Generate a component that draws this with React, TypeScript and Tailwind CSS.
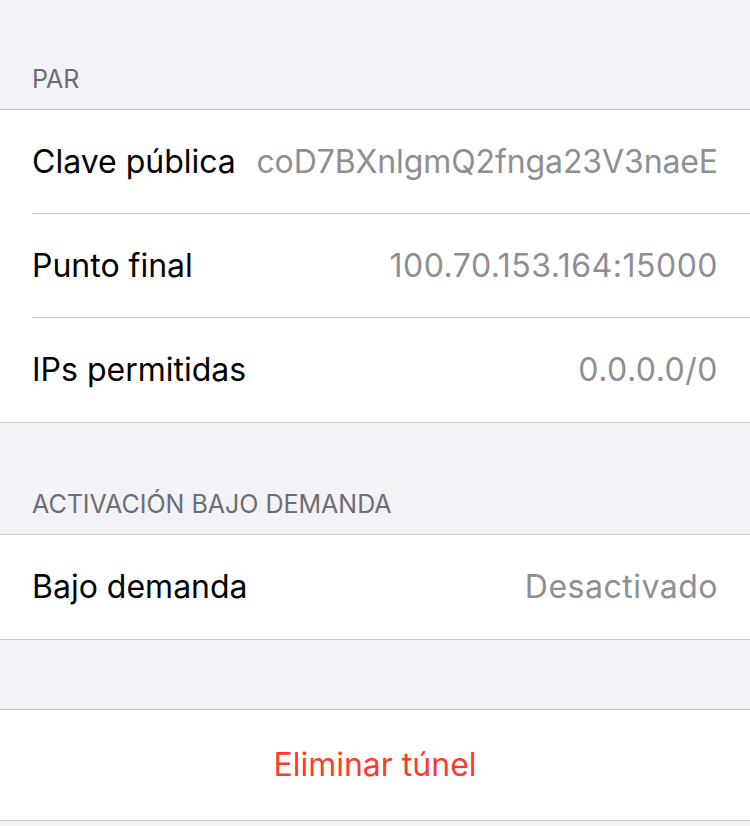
const font = { fontFamily: 'Inter, "Noto Sans", sans-serif' }

function Row({
  label,
  value,
  last,
  tight,
}: {
  label: string
  value: string
  last?: boolean
  tight?: boolean
}) {
  return (
    <div className="bg-white pl-[32px]">
      <div
        className={`flex h-[104px] items-center justify-between pr-[32px] ${last ? '' : 'border-b border-[#c8c7cc]'}`}
      >
        <span className="text-[32px] text-black whitespace-nowrap">{label}</span>
        <span
          className={`ml-[12px] whitespace-nowrap text-[32px] text-[#8e8e93] ${tight ? 'tracking-[-0.1px]' : 'tracking-[0.5px]'}`}
        >
          {value}
        </span>
      </div>
    </div>
  )
}

function SectionHeader({ title, height }: { title: string; height: string }) {
  return (
    <div className={`flex ${height} items-end px-[32px] pb-[11px] border-b border-[#c8c7cc]`}>
      <span className="text-[25px] uppercase text-[#6d6d72]">{title}</span>
    </div>
  )
}

export default function App() {
  return (
    <div className="min-h-[826px] w-[750px] bg-[#f2f2f7]" style={font}>
      <SectionHeader title="PAR" height="h-[110px]" />
      <Row label="Clave pública" value="coD7BXnlgmQ2fnga23V3naeE" tight />
      <Row label="Punto final" value="100.70.153.164:15000" />
      <Row label="IPs permitidas" value="0.0.0.0/0" last />
      <div className="border-t border-[#c8c7cc]" />
      <SectionHeader title="ACTIVACIÓN BAJO DEMANDA" height="h-[112px]" />
      <Row label="Bajo demanda" value="Desactivado" last />
      <div className="h-[71px] border-t border-[#c8c7cc] border-b" />
      <button className="flex h-[110px] w-full items-center justify-center bg-white text-[32px] text-[#ff3b30]">
        Eliminar túnel
      </button>
      <div className="border-t border-[#c8c7cc]" />
    </div>
  )
}
